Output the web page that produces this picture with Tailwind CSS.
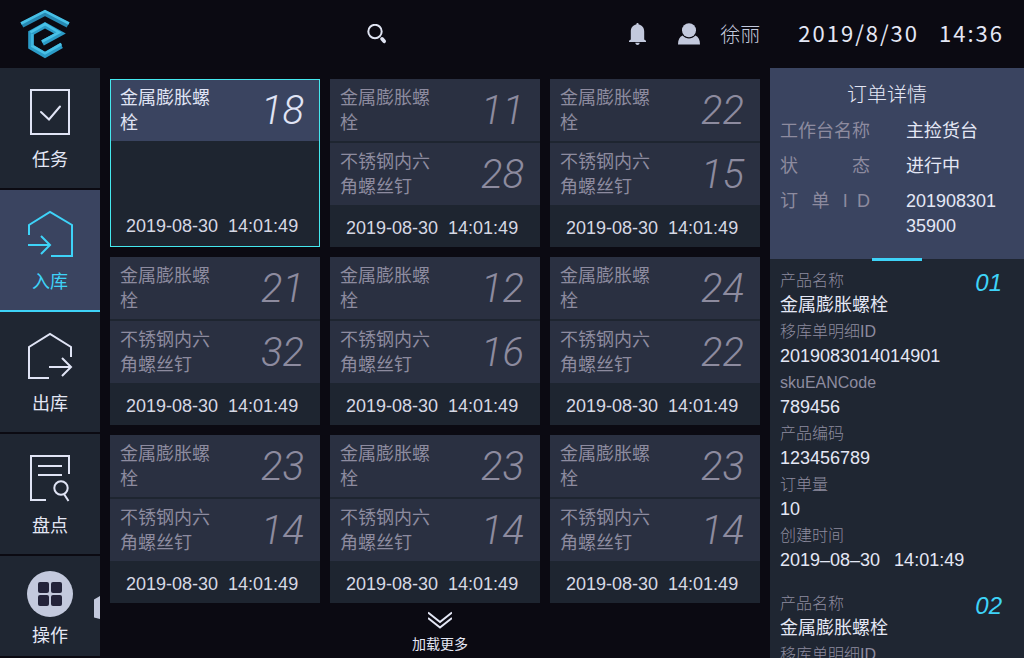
<!DOCTYPE html>
<html lang="zh-CN">
<head>
<meta charset="utf-8">
<meta name="viewport" content="width=device-width, initial-scale=1">
<title>入库</title>
<script src="https://cdn.jsdelivr.net/npm/@tailwindcss/browser@4"></script>
</head>
<body class="flex h-screen flex-col overflow-hidden bg-[#0b0a12] font-['Liberation_Sans','Noto_Sans_CJK_SC',sans-serif] text-[18px] text-[#e4e7f5]">

<header class="flex h-[68px] shrink-0 items-center px-5 font-['Noto_Sans_CJK_SC',sans-serif]">
  <a href="#" aria-label="首页" class="block">
    <svg class="block h-[50px] w-[50px]" viewBox="0 0 50 50" fill="none" stroke-linejoin="miter">
      <path d="M2 16 25 4l23 12" stroke="#2689b3" stroke-width="5.500"/>
      <path d="M1 14.500 25 2.200l24 12.300" stroke="#48c0e6" stroke-width="2.600"/>
      <path d="M22.500 34 40 24.500 25 16.300 11 24v14l14 8 16.500-9.500" stroke="#2b9bc7" stroke-width="5.600"/>
      <path d="M22 32.500 39 23.400 25 15 10.500 23.300" stroke="#48c0e6" stroke-width="2.600"/>
      <path d="M11.500 36.500 25 44.300 41.500 35" stroke="#48c0e6" stroke-width="2.600"/>
      <path d="M12.300 25v12" stroke="#3fb5de" stroke-width="2.500"/>
    </svg>
  </a>
  <button aria-label="搜索" class="ml-[297px] block">
    <svg class="block size-5" viewBox="0 0 20 20" fill="none" stroke="#e0e4f2"><circle cx="8" cy="7.500" r="6.700" stroke-width="2"/><path d="m15 14.800 2.200 2.500" stroke-width="3.600" stroke-linecap="round"/></svg>
  </button>
  <div class="ml-auto flex items-center">
    <button aria-label="通知" class="mr-8 block">
      <svg class="block h-[22px] w-[17px]" viewBox="0 0 17 22" fill="#c3c9dd"><path d="M8.500 0c-.9 0-1.200.6-1.200 1.600C3.800 2.300 1.800 5 1.800 8.500v8L0 17.800V19h17v-1.200l-1.800-1.300v-8c0-3.500-2-6.200-5.500-6.900C9.700.6 9.400 0 8.500 0zM6.300 19.800c.2 1.400 1.100 2.200 2.200 2.200s2-.8 2.200-2.200z"/></svg>
    </button>
    <button class="flex items-center text-[20px] font-light text-[#c3c9dd]">
      <svg class="mr-5 block h-[22px] w-[22px]" viewBox="0 0 22 22" fill="#c3c9dd"><circle cx="11" cy="7.300" r="7"/><path d="M4.600 12.600c3.400 4 9.400 4 12.800 0C20.500 13.800 22 17 22 21.500H0c0-4.500 1.500-7.700 4.600-8.900z"/></svg>
      徐丽
    </button>
    <time class="ml-[38px] flex gap-5 pb-[3px] text-[22px] tracking-[2px]" datetime="2019-08-30T14:36"><span>2019/8/30</span><span>14:36</span></time>
  </div>
</header>

<div class="flex min-h-0 flex-1">
  <nav class="flex w-[100px] shrink-0 flex-col">
    <a href="#" class="mb-0.5 flex h-[120px] shrink-0 flex-col items-center bg-[#1f2632] pt-5">
      <svg class="h-[48px] w-[50px]" viewBox="0 0 50 48" fill="none" stroke="#e0e4f5" stroke-width="2"><path d="M6 2h38v44H6z"/><path d="m16 24 8 7.500 11-13" stroke-linecap="round"/></svg>
      <span class="mt-2.5 leading-7">任务</span>
    </a>
    <a href="#" aria-current="page" class="flex h-[122px] shrink-0 flex-col items-center border-b-2 border-[#3ed3f8] bg-[#3a4460] pt-5 text-[#3ed3f8]">
      <svg class="h-[48px] w-[50px]" viewBox="0 0 50 48" fill="none" stroke="currentColor" stroke-width="2"><path d="M4 25V15L25 2l22 13v31H26M3 35h22M16 26l9 9-9 9"/></svg>
      <span class="mt-2.5 leading-7">入库</span>
    </a>
    <a href="#" class="mb-0.5 flex h-[120px] shrink-0 flex-col items-center bg-[#1f2632] pt-5">
      <svg class="h-[48px] w-[50px]" viewBox="0 0 50 48" fill="none" stroke="#e0e4f5" stroke-width="2"><path d="M46 25V15L25 2 4 15v31h20M24 35h22M37 26l9 9-9 9"/></svg>
      <span class="mt-2.5 leading-7">出库</span>
    </a>
    <a href="#" class="mb-0.5 flex h-[120px] shrink-0 flex-col items-center bg-[#1f2632] pt-5">
      <svg class="h-[48px] w-[50px]" viewBox="0 0 50 48" fill="none" stroke="#e0e4f5" stroke-width="2"><path d="M44 20V2H6v44h15M13 12h24M13 21h24"/><circle cx="36" cy="34" r="6.700"/><path d="m39 40 4.500 7"/></svg>
      <span class="mt-2.5 leading-7">盘点</span>
    </a>
    <button class="relative flex h-[100px] shrink-0 flex-col items-center bg-[#1f2632] pt-[15px]">
      <svg class="size-[46px]" viewBox="0 0 46 46"><circle cx="23" cy="23" r="23" fill="#c3c9dd"/><g fill="#23233a"><rect x="11" y="11" width="11" height="11" rx="2"/><rect x="24" y="11" width="11" height="11" rx="2"/><rect x="11" y="24" width="11" height="11" rx="2"/><rect x="24" y="24" width="11" height="11" rx="2"/></g></svg>
      <span class="mt-[5px] leading-7">操作</span>
      <svg class="absolute top-10 right-0 h-[23px] w-[6px]" viewBox="0 0 6 23" fill="#c3c9dd"><path d="M6 0 0 3.500v18L6 23z"/></svg>
    </button>
  </nav>

  <main class="flex min-w-0 flex-1 flex-col px-2.5 pt-[11px]">
    <div id="cards" class="grid grid-cols-3 gap-2.5"></div>
    <button class="mt-2 flex flex-col items-center self-center pl-2.5 text-[14px] leading-5">
      <svg class="mb-[5px] h-[18px] w-6" viewBox="0 0 24 18" fill="none" stroke="#e4e7f5" stroke-width="2"><path d="m0 1.500 12 9.500 12-9.500M0 7l12 9.500L24 7"/></svg>
      加载更多
    </button>
  </main>

  <aside class="flex w-[254px] shrink-0 flex-col overflow-hidden bg-[#1f2632]">
    <section class="relative bg-[#3a4460] pt-3 pr-[26px] pb-5 pl-2.5">
      <h2 class="pr-1 text-center text-[20px] leading-[30px] font-light">订单详情</h2>
      <dl class="mt-[9px] grid grid-cols-[90px_1fr] gap-x-9 gap-y-2.5 leading-[25px]">
        <dt class="text-[#8d8b9f] [text-align-last:justify]">工作台名称</dt><dd>主捡货台</dd>
        <dt class="text-[#8d8b9f] [text-align-last:justify]">状 态</dt><dd>进行中</dd>
        <dt class="text-[#8d8b9f] [text-align-last:justify]">订 单 I D</dt><dd class="break-all">20190830135900</dd>
      </dl>
      <div class="absolute -bottom-0.5 left-1/2 h-[3px] w-[50px] -translate-x-1/2 bg-[#3ed3f8]"></div>
    </section>
    <div id="items" class="flex flex-col gap-5 pt-2.5 pl-2.5"></div>
  </aside>
</div>

<script>
const A = '金属膨胀螺栓', B = '不锈钢内六角螺丝钉';
const cards = [[18], [11, 28], [22, 15], [21, 32], [12, 16], [24, 22], [23, 14], [23, 14], [23, 14]];
const row = (name, n, cls) => `<span class="flex h-[62px] items-center justify-between pt-0.5 pr-4 pl-2.5 ${cls}"><span class="w-[98px] leading-[25px] break-all">${name}</span><span class="font-['Roboto','Liberation_Sans',sans-serif] text-[40px] leading-none font-light italic">${n}</span></span>`;
document.getElementById('cards').innerHTML = cards.map(c => {
  const on = c.length === 1;
  return `<button class="flex h-[168px] flex-col items-stretch gap-0.5 bg-[#1e2530] text-left ${on ? 'outline -outline-offset-1 outline-[#45e8ee]' : ''}">` +
    row(A, c[0], on ? 'bg-[#3a4460] text-[#e0e4f5]' : 'bg-[#2a3041] text-[#8d8b9f]') +
    (on ? '' : row(B, c[1], 'bg-[#2a3041] text-[#8d8b9f]')) +
    `<span class="mt-auto flex h-10 items-center gap-2.5 pt-0.5 pl-4 text-[#d6d8e4] ${on ? 'pb-1' : ''}"><span>2019-08-30</span><span>14:01:49</span></span></button>`;
}).join('');

const fields = [['产品名称', A], ['移库单明细ID', '2019083014014901'], ['skuEANCode', '789456'], ['产品编码', '123456789'], ['订单量', '10'], ['创建时间', '<span>2019–08–30</span><span>14:01:49</span>']];
document.getElementById('items').innerHTML = ['01', '02'].map(n =>
  `<article class="relative"><dl class="flex flex-col gap-[3px]">${fields.map(([k, v]) => `<div><dt class="text-[16px] leading-6 font-light text-[#8d8b9f]">${k}</dt><dd class="flex gap-3.5 leading-6">${v}</dd></div>`).join('')}</dl><span class="absolute top-0 right-[22px] text-[24px] leading-7 text-[#3ed3f8] italic">${n}</span></article>`).join('');
</script>
</body>
</html>
